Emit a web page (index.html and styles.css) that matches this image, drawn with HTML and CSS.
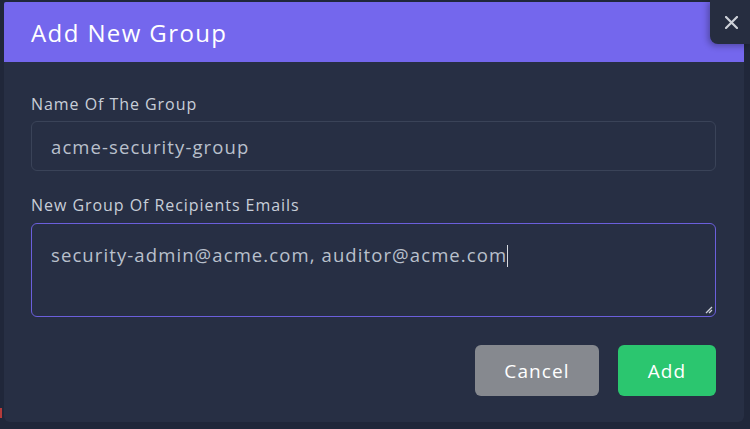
FILE: index.html
```html
<!DOCTYPE html>
<html>
<head>
<meta charset="utf-8">
<link rel="stylesheet" href="styles.css">
</head>
<body>
<div class="backdrop">
  <div class="modal">
    <div class="modal-header">Add New Group</div>
    <div class="modal-body">
      <label class="field-label">Name Of The Group</label>
      <div class="input">acme-security-group</div>
      <label class="field-label second">New Group Of Recipients Emails</label>
      <div class="textarea">security-admin@acme.com, auditor@acme.com<span class="caret"></span>
        <svg class="grip" width="8" height="8" viewBox="0 0 8 8"><path d="M7 1L1 7M7 4L4 7" stroke="#cfd3da" stroke-width="1.3"/></svg>
      </div>
      <div class="actions">
        <button class="btn cancel">Cancel</button>
        <button class="btn add">Add</button>
      </div>
    </div>
  </div>
  <button class="close" aria-label="Close"><svg width="13" height="13" viewBox="0 0 13 13"><path d="M1 1L12 12M12 1L1 12" stroke="#cdd1d8" stroke-width="2.2" stroke-linecap="round"/></svg></button>
  <span class="edge-mark"></span>
</div>
</body>
</html>
```

FILE: styles.css
```css
html, body {
  margin: 0;
  padding: 0;
  background: #20273a;
  font-family: "Open Sans", "DejaVu Sans", sans-serif;
}
.backdrop {
  width: 750px;
  height: 429px;
  position: relative;
  overflow: hidden;
  padding: 2px 0 0 4px;
  box-sizing: border-box;
}
.modal {
  width: 740px;
  height: 420px;
  background: #272f44;
  border-radius: 0 0 6px 6px;
  display: flex;
  flex-direction: column;
}
.modal-header {
  height: 60px;
  background: #7467ed;
  color: #ffffff;
  font-size: 24px;
  letter-spacing: 1.4px;
  display: flex;
  align-items: center;
  padding-left: 27px;
  box-sizing: border-box;
  border-radius: 2px 2px 0 0;
}
.modal-body {
  padding: 33px 28px 0 27px;
  display: flex;
  flex-direction: column;
}
.field-label {
  color: #c8ced8;
  font-size: 16px;
  letter-spacing: 0.95px;
  line-height: 18px;
  margin-bottom: 8px;
}
.field-label.second {
  margin-top: 25px;
  margin-bottom: 9px;
}
.input, .textarea {
  box-sizing: border-box;
  border-radius: 6px;
  color: #b9c0cc;
  font-size: 18.5px;
  letter-spacing: 1.1px;
  padding-left: 19px;
}
.input {
  height: 50px;
  border: 1px solid #3a4358;
  display: flex;
  align-items: center;
}
.textarea {
  height: 94px;
  border: 1px solid #6b5fdc;
  padding-top: 18px;
  position: relative;
}
.caret {
  display: inline-block;
  width: 1px;
  height: 22px;
  background: #d6dae0;
  vertical-align: -5px;
}
.grip {
  position: absolute;
  right: 2px;
  bottom: 2px;
}
.actions {
  display: flex;
  justify-content: flex-end;
  gap: 19px;
  margin-top: 28px;
}
.btn {
  height: 51px;
  border: none;
  border-radius: 6px;
  color: #ffffff;
  font-family: inherit;
  font-size: 19px;
  letter-spacing: 1.1px;
}
.cancel {
  width: 124px;
  background: #86898f;
}
.add {
  width: 98px;
  background: #2bc66f;
}
.close {
  position: absolute;
  top: 0;
  right: 0;
  width: 40px;
  height: 44px;
  border: none;
  padding: 0 0 0 2px;
  background: #262d40;
  border-radius: 0 0 0 8px;
  display: flex;
  align-items: center;
  justify-content: center;
  box-shadow: -2px 2px 6px rgba(0,0,0,0.3);
}
.edge-mark {
  position: absolute;
  left: 0;
  top: 408px;
  width: 2px;
  height: 10px;
  background: #b43b3b;
}
```
